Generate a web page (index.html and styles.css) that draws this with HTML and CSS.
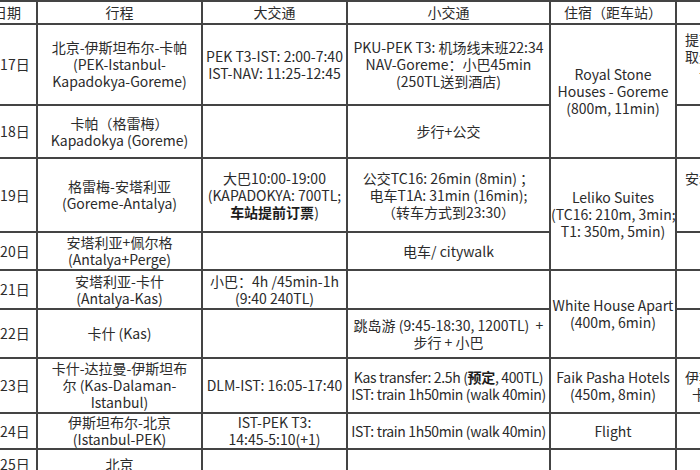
FILE: index.html
```html
<!DOCTYPE html>
<html lang="zh">
<head>
<meta charset="utf-8">
<title>土耳其行程</title>
<link rel="stylesheet" href="styles.css">
</head>
<body>
<table class="plan">
  <colgroup>
    <col class="c-date">
    <col class="c-route">
    <col class="c-big">
    <col class="c-small">
    <col class="c-stay">
    <col class="c-note">
  </colgroup>
  <tr class="r-head">
    <td class="head-date">日期</td><td>行程</td><td>大交通</td><td>小交通</td><td>住宿（距车站）</td><td>备注</td>
  </tr>
  <tr class="r17">
    <td>4月17日</td>
    <td>北京-伊斯坦布尔-卡帕<br>(PEK-Istanbul-<br>Kapadokya-Goreme)</td>
    <td>PEK T3-IST: 2:00-7:40<br>IST-NAV: 11:25-12:45</td>
    <td>PKU-PEK T3: 机场线末班22:34<br>NAV-Goreme：小巴45min<br>(250TL送到酒店)</td>
    <td rowspan="2">Royal Stone<br>Houses - Goreme<br>(800m, 11min)</td>
    <td>提前网上预订机票<br>取登机牌后去机场<br>卡帕接机车辆<br>预约</td>
  </tr>
  <tr class="r18">
    <td>4月18日</td>
    <td>卡帕（格雷梅）<br>Kapadokya (Goreme)</td>
    <td></td>
    <td>步行+公交</td>
    <td></td>
  </tr>
  <tr class="r19">
    <td>4月19日</td>
    <td>格雷梅-安塔利亚<br>(Goreme-Antalya)</td>
    <td>大巴10:00-19:00<br>(KAPADOKYA: 700TL;<br><b>车站提前订票</b>)</td>
    <td>公交TC16: 26min (8min) ；<br>电车T1A: 31min (16min);<br>（转车方式到23:30）</td>
    <td rowspan="2">Leliko Suites<br>(TC16: 210m, 3min;<br>T1: 350m, 5min)</td>
    <td>安塔利亚老城步行<br>（老城区内可步<br>行）</td>
  </tr>
  <tr class="r20">
    <td>4月20日</td>
    <td>安塔利亚+佩尔格<br>(Antalya+Perge)</td>
    <td></td>
    <td>电车/ citywalk</td>
    <td></td>
  </tr>
  <tr class="r21">
    <td>4月21日</td>
    <td>安塔利亚-卡什<br>(Antalya-Kas)</td>
    <td>小巴：4h /45min-1h<br>(9:40 240TL)</td>
    <td></td>
    <td rowspan="2">White House Apart<br>(400m, 6min)</td>
    <td></td>
  </tr>
  <tr class="r22">
    <td>4月22日</td>
    <td>卡什 (Kas)</td>
    <td></td>
    <td>跳岛游 (9:45-18:30, 1200TL)&nbsp;&nbsp;+<br>步行 + 小巴</td>
    <td></td>
  </tr>
  <tr class="r23">
    <td>4月23日</td>
    <td>卡什-达拉曼-伊斯坦布<br>尔 (Kas-Dalaman-<br>Istanbul)</td>
    <td>DLM-IST: 16:05-17:40</td>
    <td class="tight">Kas transfer: 2.5h (<b>预定</b>, 400TL)<br>IST: train 1h50min (walk 40min)</td>
    <td>Faik Pasha Hotels<br>(450m, 8min)</td>
    <td>伊斯坦布尔机场接<br>卡什汽车站出发</td>
  </tr>
  <tr class="r24">
    <td>4月24日</td>
    <td>伊斯坦布尔-北京<br>(Istanbul-PEK)</td>
    <td>IST-PEK T3:<br>14:45-5:10(+1)</td>
    <td class="tight">IST: train 1h50min (walk 40min)</td>
    <td>Flight</td>
    <td></td>
  </tr>
  <tr class="r25">
    <td>4月25日</td>
    <td>北京</td>
    <td></td>
    <td></td>
    <td></td>
    <td></td>
  </tr>
</table>
</body>
</html>
```

FILE: styles.css
```css
html, body {
  margin: 0;
  padding: 0;
  background: #ffffff;
}

body {
  width: 700px;
  height: 470px;
  overflow: hidden;
  font-family: "Noto Sans CJK SC", sans-serif;
  font-size: 14px;
  line-height: 17px;
  color: #2b2b2b;
}

.plan {
  border-collapse: collapse;
  table-layout: fixed;
  width: 835px;
  margin-left: -30px;
}

.plan td {
  border: 2px solid #444444;
  padding: 0;
  text-align: center;
  vertical-align: middle;
  white-space: nowrap;
  overflow: hidden;
}

.plan .head-date {
  padding-left: 6px;
}

.plan .tight {
  letter-spacing: -0.35px;
}

.plan b {
  font-weight: bold;
  color: #1c1c1c;
}

.c-date { width: 66px; }
.c-route { width: 165px; }
.c-big { width: 145px; }
.c-small { width: 203px; }
.c-stay { width: 126px; }
.c-note { width: 130px; }

.r-head { height: 23px; }
.r17 { height: 81px; }
.r18 { height: 53px; }
.r19 { height: 74px; }
.r20 { height: 38px; }
.r21 { height: 39px; }
.r22 { height: 49px; }
.r23 { height: 55px; }
.r24 { height: 35px; }
.r25 { height: 30px; }
```
